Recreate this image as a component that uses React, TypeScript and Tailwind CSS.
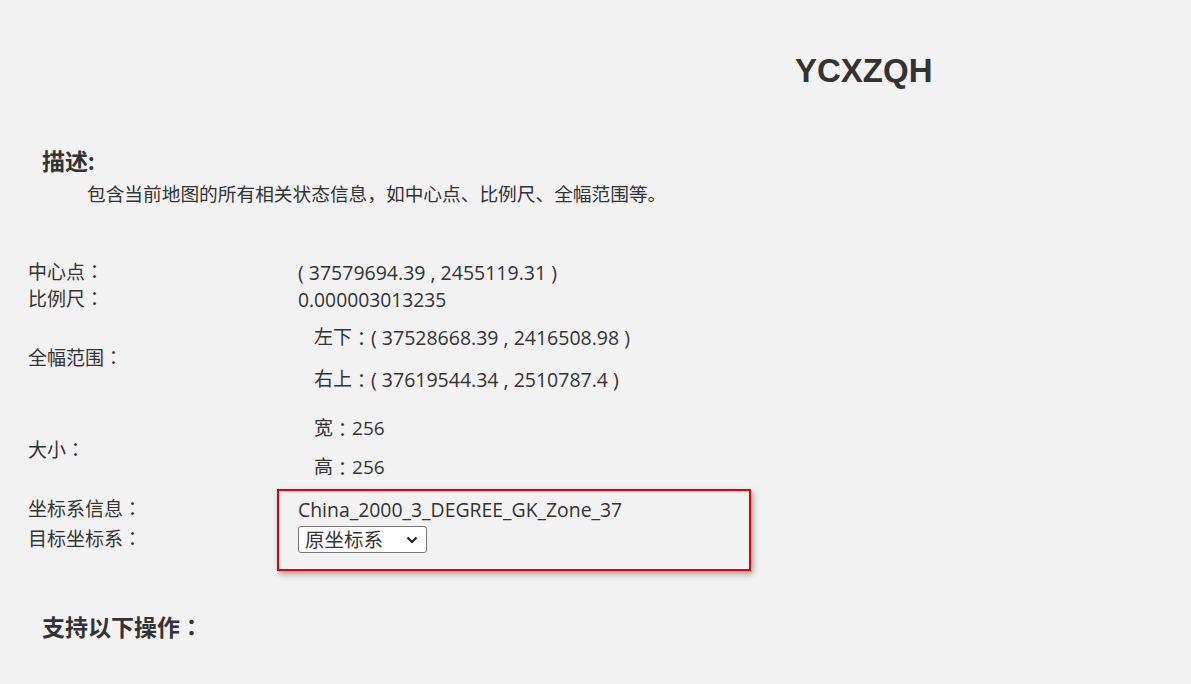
import React from "react";

const font = { fontFamily: '"Open Sans", "Noto Sans CJK SC", sans-serif' };
const tc = { fontFamily: '"Noto Sans CJK TC", sans-serif' };

function C() {
  return (
    <span className="leading-none" style={tc}>
      ：
    </span>
  );
}

function Row({ label, children, className = "" }: { label: string; children: React.ReactNode; className?: string }) {
  return (
    <div className={`flex items-center h-[27px] ${className}`}>
      <div className="w-[270px] shrink-0">
        {label}
        <C />
      </div>
      <div>{children}</div>
    </div>
  );
}

function Line({ children }: { children: React.ReactNode }) {
  return <div className="h-[27px] flex items-center">{children}</div>;
}

export default function App() {
  return (
    <div
      className="min-h-screen w-full bg-[#f2f2f2] text-[#333] text-[19px] leading-[27px]"
      style={font}
    >
      <div className="pt-[48px] pl-[795px]">
        <h1 className="text-[33px] font-bold leading-[46px] text-[#333]" style={{ fontFamily: '"Liberation Sans", Arial, sans-serif' }}>
          YCXZQH
        </h1>
      </div>

      <div className="pl-[42px] mt-[52px]">
        <h2 className="text-[23px] font-bold leading-[30px]">描述:</h2>
        <p className="pl-[45px] mt-[4px] text-[18.7px] leading-[27px]">
          包含当前地图的所有相关状态信息，如中心点、比例尺、全幅范围等。
        </p>
      </div>

      <div className="pl-[28px] mt-[52px] flex flex-col">
        <Row label="中心点">
          <span className="text-[19.5px]">( 37579694.39 , 2455119.31 )</span>
        </Row>
        <Row label="比例尺">
          <span className="text-[19.3px]">0.000003013235</span>
        </Row>
        <div className="flex items-center mt-[11px]">
          <div className="w-[270px] shrink-0">
            全幅范围
            <C />
          </div>
          <div className="flex flex-col gap-[15px] pl-[16px]">
            <Line>
              左下<C />
              <span className="text-[19.5px]">( 37528668.39 , 2416508.98 )</span>
            </Line>
            <Line>
              右上<C />
              <span className="text-[19.5px]">( 37619544.34 , 2510787.4 )</span>
            </Line>
          </div>
        </div>
        <div className="flex items-center mt-[22px]">
          <div className="w-[270px] shrink-0 pt-[4px]">
            大小
            <C />
          </div>
          <div className="flex flex-col gap-[12px] pl-[16px]">
            <Line>
              宽<C />256
            </Line>
            <Line>
              高<C />256
            </Line>
          </div>
        </div>
        <div className="relative mt-[15px]">
          <Row label="坐标系信息">
            <span className="text-[19.4px]">China_2000_3_DEGREE_GK_Zone_37</span>
          </Row>
          <Row label="目标坐标系" className="mt-[3px]">
            <div className="relative h-[27px] w-[129px] rounded-[3px] border border-[#767676] bg-white flex items-center pl-[6px] text-[19.5px] leading-[25px]">
              原坐标系
              <svg className="absolute right-[8px] top-[9px]" width="12" height="8" viewBox="0 0 12 8">
                <path d="M1.5 1.5 L6 6 L10.5 1.5" fill="none" stroke="#222" strokeWidth="2.2" />
              </svg>
            </div>
          </Row>
          <div className="pointer-events-none absolute left-[249px] top-[-7px] h-[82px] w-[474px] border-2 border-[#e3000b] shadow-[2px_3px_6px_rgba(0,0,0,0.35)]" />
        </div>
      </div>

      <div className="pl-[42px] mt-[59px]">
        <h2 className="text-[23px] font-bold leading-[30px]">
          支持以下操作
          <span className="leading-none" style={tc}>
            ：
          </span>
        </h2>
      </div>
    </div>
  );
}
